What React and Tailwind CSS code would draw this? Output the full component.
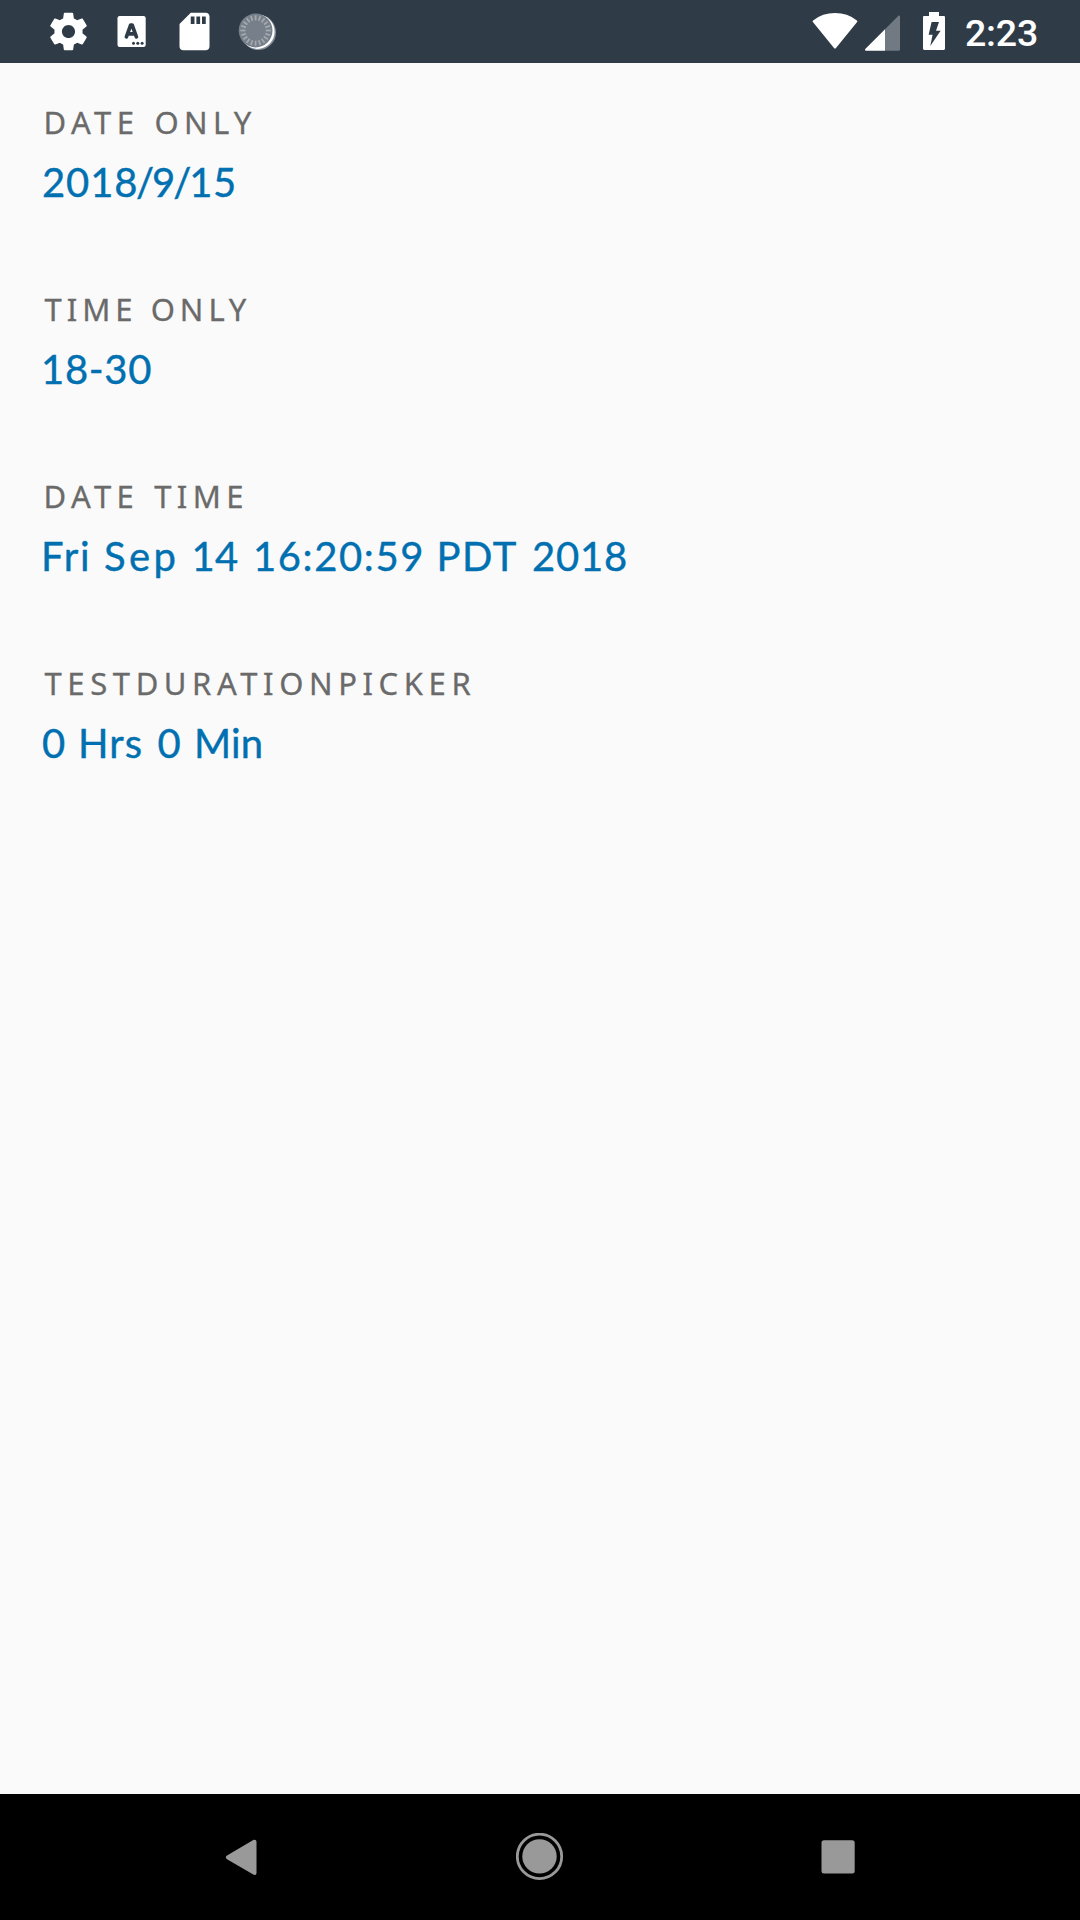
const FIELDS = [
  {
    label: "DATE ONLY",
    labelClass: "pl-[43.5px] tracking-[5.45px] [word-spacing:1.5px]",
    valueClass: "pl-[42px]",
    words: [
      { text: "2018", className: "tracking-[0.9px]" },
      { text: "/", className: "-ml-[2.4px] tracking-[-2.2px]" },
      { text: "9", className: "tracking-[0.6px]" },
      { text: "/", className: "-ml-[2.4px] tracking-[-2.2px]" },
      { text: "15", className: "tracking-[0.6px]" },
    ],
  },
  {
    label: "TIME ONLY",
    labelClass: "pl-[44.5px] tracking-[5px]",
    valueClass: "pl-[41px]",
    words: [{ text: "18-30", className: "tracking-[0.7px]" }],
  },
  {
    label: "DATE TIME",
    labelClass: "pl-[43.5px] tracking-[5.4px] [word-spacing:1.5px]",
    valueClass: "pl-[41px]",
    words: [
      { text: "Fri ", className: "w-[63px] tracking-[1.8px]" },
      { text: "Sep ", className: "w-[87.5px] tracking-[3.4px]" },
      { text: "14 ", className: "w-[61.5px] tracking-[0.4px]" },
      { text: "16:20:59 ", className: "w-[183.5px] tracking-[1.6px]" },
      { text: "PDT ", className: "w-[95.5px] tracking-[1.6px]" },
      { text: "2018", className: "tracking-[0.8px]" },
    ],
  },
  {
    label: "TESTDURATIONPICKER",
    labelClass: "pl-[44.5px] tracking-[5.6px]",
    valueClass: "pl-[42px]",
    words: [
      { text: "0 ", className: "w-[36px]" },
      { text: "Hrs ", className: "w-[79.5px] tracking-[1px]" },
      { text: "0 ", className: "w-[36.5px]" },
      { text: "Min", className: "tracking-[0.2px]" },
    ],
  },
];

const SPINNER_TICKS = Array.from({ length: 20 }, (_, i) => i * 18);

function GearIcon() {
  return (
    <svg className="size-[45px]" viewBox="0 0 24 24" fill="#fff">
      <path d="M19.43 12.98c.04-.32.07-.64.07-.98s-.03-.66-.07-.98l2.11-1.65c.19-.15.24-.42.12-.64l-2-3.46c-.12-.22-.39-.3-.61-.22l-2.49 1c-.52-.4-1.08-.73-1.69-.98l-.38-2.65C14.46 2.18 14.25 2 14 2h-4c-.25 0-.46.18-.49.42l-.38 2.65c-.61.25-1.17.59-1.69.98l-2.49-1c-.23-.09-.49 0-.61.22l-2 3.46c-.13.22-.07.49.12.64l2.11 1.65c-.04.32-.07.65-.07.98s.03.66.07.98l-2.11 1.65c-.19.15-.24.42-.12.64l2 3.46c.12.22.39.3.61.22l2.49-1c.52.4 1.08.73 1.69.98l.38 2.65c.03.24.24.42.49.42h4c.25 0 .46-.18.49-.42l.38-2.65c.61-.25 1.17-.59 1.69-.98l2.49 1c.23.09.49 0 .61-.22l2-3.46c.12-.22.07-.49-.12-.64l-2.11-1.65zM12 15.5c-1.93 0-3.5-1.57-3.5-3.5s1.57-3.5 3.5-3.5 3.5 1.57 3.5 3.5-1.57 3.5-3.5 3.5z" />
    </svg>
  );
}

function KeyboardIcon() {
  return (
    <svg className="size-[45px]" viewBox="0 0 45 45">
      <rect x="8.5" y="7" width="28.2" height="31" rx="2.2" fill="#fff" />
      <path d="M17.4 27.8L21.7 16h1.4L27.400 27.800M19 24.800h6.800" fill="none" stroke="#2f3c48" strokeWidth="3.7" strokeLinecap="round" strokeLinejoin="round" />
      <g fill="#2f3c48">
        <circle cx="24.5" cy="34.2" r="1.5" />
        <circle cx="28.8" cy="34.2" r="1.5" />
        <circle cx="33.1" cy="34.2" r="1.5" />
      </g>
    </svg>
  );
}

function SdCardIcon() {
  return (
    <svg className="size-[45px]" viewBox="0 0 24 24" fill="#fff">
      <path d="M18 2h-8L4.02 8 4 20c0 1.1.9 2 2 2h12c1.1 0 2-.9 2-2V4c0-1.1-.9-2-2-2zm-6 6h-2V4h2v4zm3 0h-2V4h2v4zm3 0h-2V4h2v4z" />
    </svg>
  );
}

function SpinnerIcon() {
  return (
    <svg className="size-[45px]" viewBox="0 0 45 45">
      <circle cx="23.4" cy="23.4" r="17.6" fill="#87909a" />
      <circle cx="22.400" cy="22.700" r="17.200" fill="#fff" />
      <circle cx="20.600" cy="21.500" r="16.900" fill="#77808a" />
      <g stroke="#a4aaaf" strokeWidth="1.7">
        {SPINNER_TICKS.map((angle) => (
          <path key={angle} d="M20.600 11.300v-5" transform={`rotate(${angle} 20.6 21.5)`} />
        ))}
      </g>
    </svg>
  );
}

function WifiIcon() {
  return (
    <svg className="h-[37px] w-[46px]" viewBox="0 0 46 37">
      <path d="M1.100 8.400Q10.500 1 23 1t21.900 7.400c.6.5.6 1 .2 1.600L24 36c-.6.8-1.400.8-2 0L.9 10c-.4-.6-.4-1.100.2-1.600z" fill="#fff" />
    </svg>
  );
}

function SignalIcon() {
  return (
    <svg className="h-[37px] w-[36px]" viewBox="0 0 36 37">
      <path d="M20 15.200L33.200 2c.8-.8 1.800-.5 1.800.6V35.400c0 .9-.5 1.400-1.400 1.400H20z" fill="#717983" />
      <path d="M20 15.200V36.800H1.400C0 36.800-.4 35.600.5 34.700z" fill="#fff" />
    </svg>
  );
}

function BatteryIcon() {
  return (
    <svg className="h-[38px] w-[22px]" viewBox="0 0 22 38">
      <path d="M6 0h10v4h4.600c.9 0 1.400.5 1.400 1.400V36.600c0 .9-.5 1.400-1.400 1.400H1.400C.5 38 0 37.500 0 36.600V5.400C0 4.500.5 4 1.400 4H6z" fill="#fff" />
      <path d="M8.600 10H16L13 18.800h4.600L7.300 34l2.300-11.200H5.600z" fill="#2f3c48" />
    </svg>
  );
}

function StatusBar() {
  return (
    <header className="flex h-[63px] items-start justify-between bg-[#2f3c48]">
      <div className="flex gap-[18px] pt-[9px] pl-[46px]">
        <GearIcon />
        <KeyboardIcon />
        <SdCardIcon />
        <SpinnerIcon />
      </div>
      <div className="flex pt-3">
        <WifiIcon />
        <div className="ml-[7px] pt-[1.5px]"><SignalIcon /></div>
        <div className="ml-[22px]"><BatteryIcon /></div>
        <span className="ml-[20px] w-[115px] font-['Roboto',sans-serif] text-[37.5px] leading-[42px] font-medium tracking-[-0.2px] text-white">2:23</span>
      </div>
    </header>
  );
}

function Field({ field }) {
  return (
    <section className="h-[187px] whitespace-pre">
      <div className={`h-[60px] font-['Noto_Sans',sans-serif] text-[31px] leading-[60px] text-[#6a6a6a] [-webkit-text-stroke:0.3px_#6a6a6a] ${field.labelClass}`}>
        {field.label}
      </div>
      <div className={`flex h-[60px] font-['Lato',sans-serif] text-[40px] leading-[60px] text-[#0070b1] [-webkit-text-stroke:0.4px_#0070b1] ${field.valueClass}`}>
        {field.words.map((word, i) => (
          <span key={i} className={`shrink-0 ${word.className}`}>{word.text}</span>
        ))}
      </div>
    </section>
  );
}

function NavigationBar() {
  return (
    <nav className="flex h-[126px] items-center justify-center gap-[250.5px] bg-black">
      <svg className="h-12 w-12" viewBox="0 0 48 48">
        <path d="M9 22.400L35.300 7c1.600-.9 3.200-.1 3.200 1.700v31.200c0 1.800-1.600 2.600-3.200 1.700L9 26.200c-1.600-1-1.600-2.800 0-3.800z" fill="#999" />
      </svg>
      <svg className="h-12 w-12" viewBox="0 0 48 48">
        <circle cx="23.500" cy="23.400" r="17.200" fill="#999" />
        <circle cx="23.500" cy="23.400" r="22.200" fill="none" stroke="#999" strokeWidth="2.800" />
      </svg>
      <svg className="h-12 w-12" viewBox="0 0 48 48">
        <rect x="6.500" y="7.200" width="33.200" height="33.200" rx="2.500" fill="#999" />
      </svg>
    </nav>
  );
}

export default function App() {
  return (
    <div className="flex h-[1920px] w-[1080px] flex-col overflow-hidden bg-[#fafafa]">
      <StatusBar />
      <main className="flex-1 pt-[29px]">
        {FIELDS.map((field) => (
          <Field key={field.label} field={field} />
        ))}
      </main>
      <NavigationBar />
    </div>
  );
}
